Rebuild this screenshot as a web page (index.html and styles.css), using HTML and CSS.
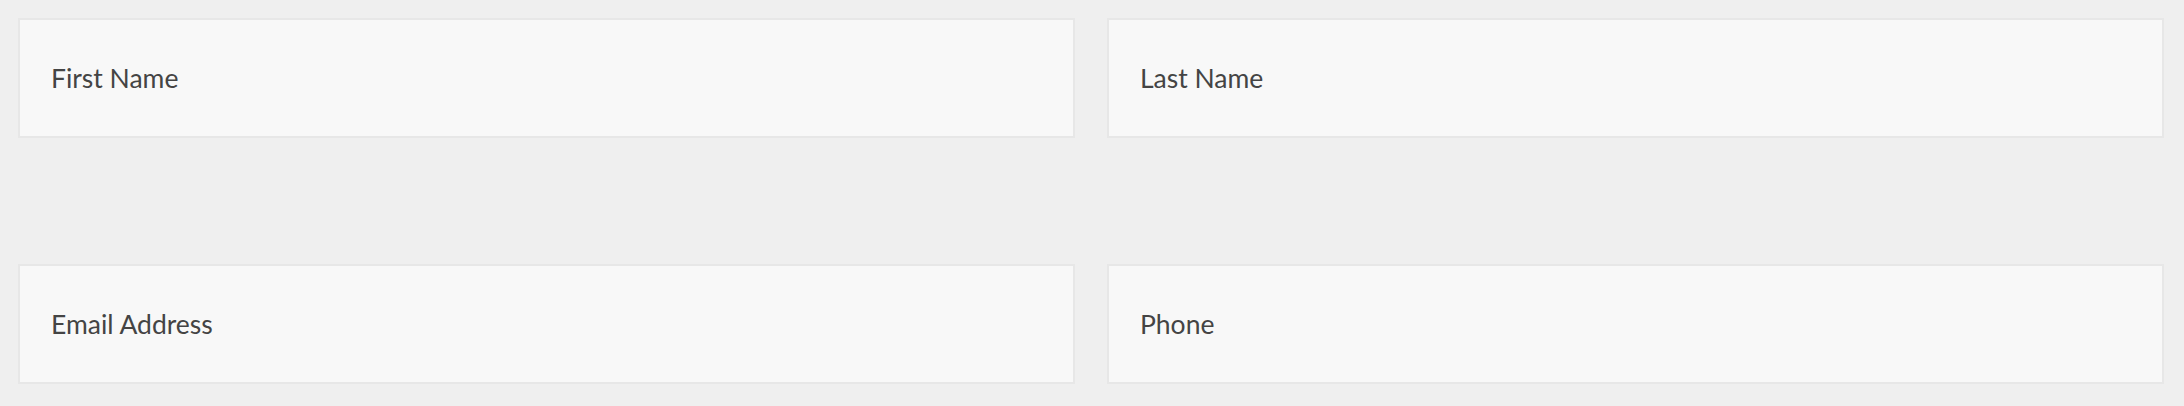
FILE: index.html
```html
<!DOCTYPE html>
<html lang="en">
<head>
    <meta charset="UTF-8">
    <meta name="viewport" content="width=device-width, initial-scale=1.0">
    <title>Contact Details</title>
    <link rel="stylesheet" href="styles.css">
</head>
<body>
    <form class="contact-form">
        <input class="field" type="text" name="first_name" placeholder="First Name">
        <input class="field" type="text" name="last_name" placeholder="Last Name">
        <input class="field" type="email" name="email" placeholder="Email Address">
        <input class="field" type="tel" name="phone" placeholder="Phone">
    </form>
</body>
</html>
```

FILE: styles.css
```css
body {
    margin: 0;
    padding: 18px 20px 0 18px;
    background-color: #efefef;
    font-family: Lato, "Open Sans", sans-serif;
}

.contact-form {
    display: grid;
    grid-template-columns: 1fr 1fr;
    column-gap: 32px;
    row-gap: 126px;
}

.field {
    box-sizing: border-box;
    width: 100%;
    height: 120px;
    margin: 0;
    padding: 0 31px;
    border: 2px solid #e7e7e7;
    border-radius: 0;
    background-color: #f8f8f8;
    font-family: inherit;
    font-size: 26.5px;
    color: #444;
    outline: none;
}

.field::placeholder {
    color: #444;
    opacity: 1;
}
```
